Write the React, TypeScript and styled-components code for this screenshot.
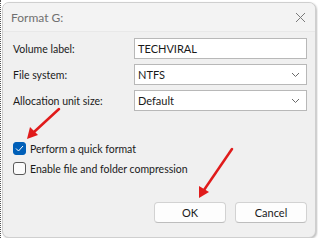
import React from 'react';
import styled, { createGlobalStyle } from 'styled-components';

const GlobalStyle = createGlobalStyle`
  html, body {
    margin: 0;
    padding: 0;
    background: #ffffff;
  }
  body {
    font-family: Lato, "Liberation Sans", sans-serif;
  }
`;

const Page = styled.div`
  position: relative;
  width: 318px;
  height: 238px;
  overflow: hidden;
  background: #ffffff;
  border-left: 1px dotted #555;
  box-sizing: border-box;
`;

const Dialog = styled.div`
  margin: 2px 2px 0 1px;
  height: 234px;
  background: #f0f0f0;
  border: 1px solid #cfcfcf;
  border-radius: 7px;
  box-shadow: 1px 1px 2px rgba(0, 0, 0, 0.25);
  display: flex;
  flex-direction: column;
  overflow: hidden;
`;

const TitleBar = styled.div`
  height: 28px;
  display: flex;
  align-items: center;
  justify-content: space-between;
  padding: 0 9px 0 8px;
  background: #f3f3f3;
  border-bottom: 1px solid #e8e8e8;
`;

const Title = styled.span`
  font-size: 12px;
  color: #707070;
`;

const Body = styled.div`
  padding: 6px 8px 0 10px;
  display: flex;
  flex-direction: column;
`;

const Form = styled.div`
  display: grid;
  grid-template-columns: 121px 1fr;
  row-gap: 5px;
  align-items: center;
`;

const Label = styled.span`
  font-size: 10.5px;
  color: #1a1a1a;
`;

const Field = styled.div`
  height: 21px;
  box-sizing: border-box;
  background: #ffffff;
  border: 1px solid #b8b8b8;
  display: flex;
  align-items: center;
  justify-content: space-between;
  padding: 0 6px 0 3px;
  font-size: 11px;
  color: #1a1a1a;
`;

const Options = styled.div`
  margin-top: 31px;
  display: flex;
  flex-direction: column;
  gap: 7px;
`;

const Option = styled.label`
  display: flex;
  align-items: center;
  gap: 4px;
  font-size: 10.5px;
  color: #1a1a1a;
  height: 13px;
`;

const Box = styled.span<{ $checked?: boolean }>`
  width: 13px;
  height: 13px;
  box-sizing: border-box;
  border-radius: 3px;
  background: ${(p) => (p.$checked ? '#005fb8' : '#fbfbfb')};
  border: 1px solid ${(p) => (p.$checked ? '#005fb8' : '#5a5a5a')};
  display: flex;
  align-items: center;
  justify-content: center;
`;

const Buttons = styled.div`
  margin-top: 27px;
  display: flex;
  justify-content: flex-end;
  gap: 9px;
`;

const Button = styled.button`
  width: 72px;
  height: 21px;
  background: #fdfdfd;
  border: 1px solid #d2d2d2;
  border-bottom-color: #bdbdbd;
  border-radius: 4px;
  font-family: inherit;
  font-size: 11px;
  color: #1a1a1a;
  padding: 0;
`;

const Arrows = styled.svg`
  position: absolute;
  left: 0;
  top: 0;
  pointer-events: none;
`;

const Chevron = () => (
  <svg width="9" height="6" viewBox="0 0 9 6">
    <path d="M1 1 L4.5 4.5 L8 1" fill="none" stroke="#6a6a6a" strokeWidth="1" />
  </svg>
);

const App: React.FC = () => {
  return (
    <>
      <GlobalStyle />
      <Page>
        <Dialog>
          <TitleBar>
            <Title>Format G:</Title>
            <svg width="11" height="11" viewBox="0 0 11 11">
              <path d="M1 1 L10 10 M10 1 L1 10" stroke="#7a7a7a" strokeWidth="1" />
            </svg>
          </TitleBar>
          <Body>
            <Form>
              <Label>Volume label:</Label>
              <Field>TECHVIRAL</Field>
              <Label>File system:</Label>
              <Field>
                NTFS
                <Chevron />
              </Field>
              <Label>Allocation unit size:</Label>
              <Field>
                Default
                <Chevron />
              </Field>
            </Form>
            <Options>
              <Option>
                <Box $checked>
                  <svg width="9" height="7" viewBox="0 0 9 7">
                    <path d="M1 3.5 L3.5 6 L8 1" fill="none" stroke="#ffffff" strokeWidth="1" />
                  </svg>
                </Box>
                Perform a quick format
              </Option>
              <Option>
                <Box />
                Enable file and folder compression
              </Option>
            </Options>
            <Buttons>
              <Button>OK</Button>
              <Button>Cancel</Button>
            </Buttons>
          </Body>
        </Dialog>
        <Arrows width="318" height="238" viewBox="0 0 318 238">
          <path d="M58 109 L33 132" stroke="#e01b1b" strokeWidth="2.5" strokeLinecap="round" />
          <path d="M26 139 L29 127 L37 135 Z" fill="#e01b1b" />
          <path d="M231 149 L203 190" stroke="#e01b1b" strokeWidth="2.5" strokeLinecap="round" />
          <path d="M198 198 L198 186 L208 192 Z" fill="#e01b1b" />
        </Arrows>
      </Page>
    </>
  );
};

export default App;
